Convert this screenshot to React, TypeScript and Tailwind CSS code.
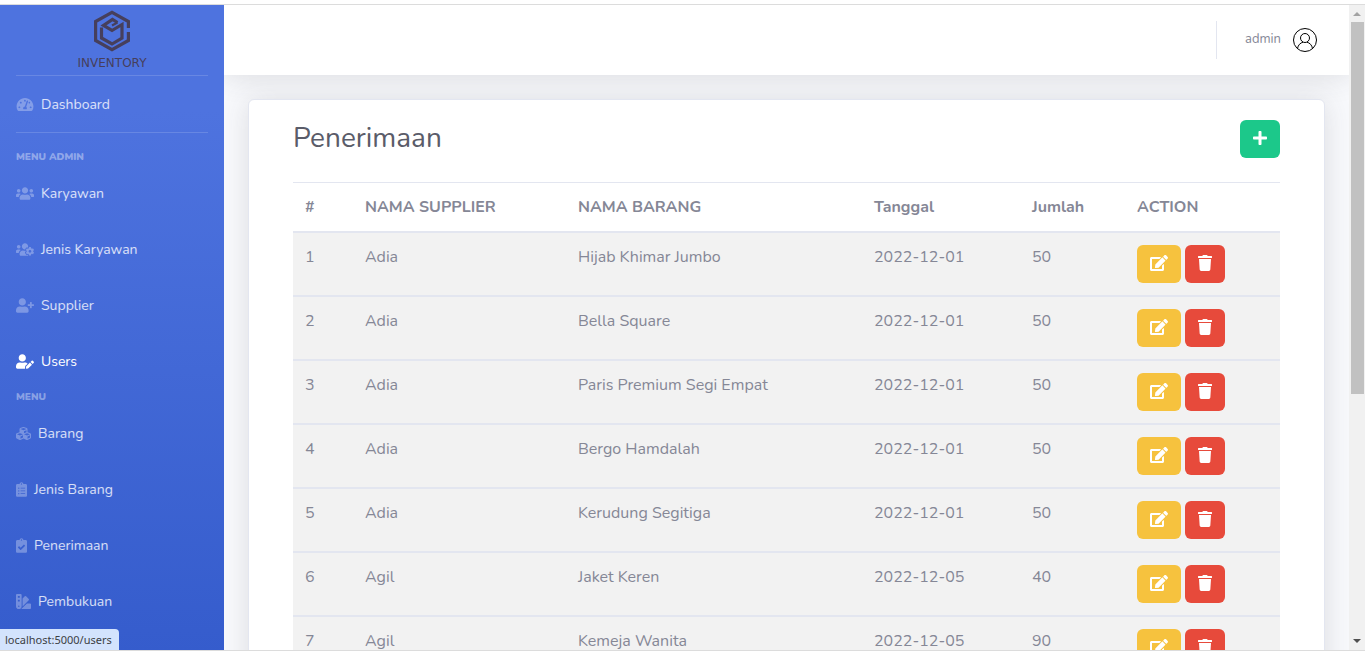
import {
  FaClipboardCheck,
  FaClipboardList,
  FaCubes,
  FaEdit,
  FaPlus,
  FaSwatchbook,
  FaTachometerAlt,
  FaTrash,
  FaUserEdit,
  FaUserPlus,
  FaUsers,
  FaUsersCog,
} from "react-icons/fa";
import type { IconType } from "react-icons";

type MenuItem = { label: string; icon: IconType; width: string; active?: boolean };

const adminMenu: MenuItem[] = [
  { label: "Karyawan", icon: FaUsers, width: "w-[18px]" },
  { label: "Jenis Karyawan", icon: FaUsersCog, width: "w-[18px]" },
  { label: "Supplier", icon: FaUserPlus, width: "w-[18px]" },
  { label: "Users", icon: FaUserEdit, width: "w-[18px]", active: true },
];

const menu: MenuItem[] = [
  { label: "Barang", icon: FaCubes, width: "w-[15px]" },
  { label: "Jenis Barang", icon: FaClipboardList, width: "w-[11px]" },
  { label: "Penerimaan", icon: FaClipboardCheck, width: "w-[11px]" },
  { label: "Pembukuan", icon: FaSwatchbook, width: "w-[15px]" },
];

const rows = [
  { supplier: "Adia", barang: "Hijab Khimar Jumbo", tanggal: "2022-12-01", jumlah: 50 },
  { supplier: "Adia", barang: "Bella Square", tanggal: "2022-12-01", jumlah: 50 },
  { supplier: "Adia", barang: "Paris Premium Segi Empat", tanggal: "2022-12-01", jumlah: 50 },
  { supplier: "Adia", barang: "Bergo Hamdalah", tanggal: "2022-12-01", jumlah: 50 },
  { supplier: "Adia", barang: "Kerudung Segitiga", tanggal: "2022-12-01", jumlah: 50 },
  { supplier: "Agil", barang: "Jaket Keren", tanggal: "2022-12-05", jumlah: 40 },
  { supplier: "Agil", barang: "Kemeja Wanita", tanggal: "2022-12-05", jumlah: 90 },
];

function Logo() {
  return (
    <a href="#" className="flex h-[70px] flex-col items-center pt-[5px] text-[#463f5c]">
      <svg viewBox="0 0 38 42" className="h-[42px] w-[38px]" fill="none" stroke="currentColor" strokeWidth="3.2">
        <path d="M35.4 18V11.5L19 2.4L2.6 11.5V30.5L19 39.6L35.4 30.5V22" />
        <path d="M8.500 17.500V28L19 34L29 28V14.500L19 20.500L10.500 15.500L19.500 9.500L24.500 12.500" />
        <path strokeWidth="2" d="M24.500 12.500L19 15.500" />
      </svg>
      <span className="mt-[3px] font-['DejaVu_Sans',sans-serif] text-[12px] leading-4">INVENTORY</span>
    </a>
  );
}

function SidebarLink({ item }: { item: MenuItem }) {
  const Icon = item.icon;
  return (
    <li>
      <a
        href="#"
        className={`flex h-14 items-center gap-[7px] px-4 text-[14px] ${item.active ? "text-white" : "text-white/80"}`}
      >
        <Icon className={`h-[15px] shrink-0 ${item.width} ${item.active ? "text-white" : "text-white/30"}`} />
        {item.label}
      </a>
    </li>
  );
}

function Sidebar() {
  return (
    <nav className="h-[1060px] w-56 shrink-0 bg-linear-to-b from-[#4e73df] from-10% to-[#224abe]">
      <Logo />
      <hr className="mx-4 border-white/15" />
      <ul>
        <SidebarLink item={{ label: "Dashboard", icon: FaTachometerAlt, width: "w-[18px]" }} />
      </ul>
      <hr className="mx-4 mb-4 border-white/15" />
      <h2 className="px-4 text-[10px] leading-4 font-black text-white/40">MENU ADMIN</h2>
      <ul>
        {adminMenu.map((item) => (
          <SidebarLink key={item.label} item={item} />
        ))}
      </ul>
      <h2 className="px-4 text-[10px] leading-4 font-black text-white/40">MENU</h2>
      <ul>
        {menu.map((item) => (
          <SidebarLink key={item.label} item={item} />
        ))}
      </ul>
    </nav>
  );
}

function Topbar() {
  return (
    <header className="flex h-[70px] items-center justify-end bg-white pr-8 shadow-[0_2px_28px_rgba(58,59,69,0.15)]">
      <div className="h-[38px] border-l border-[#e3e6f0]" />
      <button type="button" className="ml-7 flex items-center gap-3 text-[13px] text-[#858796]">
        admin
        <svg viewBox="0 0 24 24" className="size-6 text-black" fill="none" stroke="currentColor" strokeWidth="1">
          <circle cx="12" cy="12" r="11.5" />
          <circle cx="12" cy="10" r="4.5" />
          <path d="M4.500 20.500C5 17 7.500 14.800 10 14.200M19.500 20.500C19 17 16.500 14.800 14 14.200" />
        </svg>
      </button>
    </header>
  );
}

function PenerimaanTable() {
  return (
    <table className="mt-6 w-full table-fixed border-collapse text-left text-[16px] leading-6">
      <thead>
        <tr className="border-t border-b-2 border-[#e3e6f0] font-bold">
          <th className="w-[60px] p-3">#</th>
          <th className="w-[213px] p-3">NAMA SUPPLIER</th>
          <th className="w-[296px] p-3">NAMA BARANG</th>
          <th className="w-[158px] p-3">Tanggal</th>
          <th className="w-[105px] p-3">Jumlah</th>
          <th className="p-3">ACTION</th>
        </tr>
      </thead>
      <tbody>
        {rows.map((row, i) => (
          <tr key={row.barang} className="border-b-2 border-[#e3e6f0] bg-[#f2f2f2] align-top">
            <td className="p-3">{i + 1}</td>
            <td className="p-3">{row.supplier}</td>
            <td className="p-3">{row.barang}</td>
            <td className="p-3">{row.tanggal}</td>
            <td className="p-3">{row.jumlah}</td>
            <td className="p-3">
              <div className="flex gap-1">
                <button
                  type="button"
                  aria-label="Edit"
                  className="flex h-[38px] w-11 items-center justify-center rounded-md bg-[#f6c23e] pb-0.5 text-white"
                >
                  <FaEdit className="h-4 w-[18px]" />
                </button>
                <button
                  type="button"
                  aria-label="Hapus"
                  className="flex h-[38px] w-10 items-center justify-center rounded-md bg-[#e74a3b] pb-0.5 text-white"
                >
                  <FaTrash className="h-4 w-[14px]" />
                </button>
              </div>
            </td>
          </tr>
        ))}
      </tbody>
    </table>
  );
}

function Scrollbar() {
  return (
    <div className="flex w-4 shrink-0 flex-col items-center bg-[#f1f1f1]">
      <svg viewBox="0 0 16 17" className="h-[17px] w-4 fill-[#a3a3a3]">
        <path d="M4 11L8 7L12 11Z" />
      </svg>
      <div className="h-[372px] w-[13px] bg-[#c1c1c1]" />
      <svg viewBox="0 0 16 17" className="mt-auto h-[17px] w-4 fill-[#505050]">
        <path d="M4 6L8 10L12 6Z" />
      </svg>
    </div>
  );
}

export default function App() {
  return (
    <div className="relative flex h-screen flex-col overflow-hidden bg-white pt-1 font-['Nunito','Open_Sans',sans-serif] text-[#858796]">
      <div className="flex min-h-0 flex-1 overflow-hidden border-y border-[#dcdcdc]">
        <Sidebar />
        <div className="min-w-0 flex-1 overflow-hidden bg-[#f8f9fc]">
          <Topbar />
          <main className="px-6 pt-6">
            <section className="rounded-md border border-[#e3e6f0] bg-white px-11 pt-5 pb-11 shadow-[0_2px_28px_rgba(58,59,69,0.15)]">
              <div className="flex items-start justify-between">
                <h1 className="text-[28px] leading-9 font-normal text-[#5a5c69]">Penerimaan</h1>
                <button
                  type="button"
                  aria-label="Tambah"
                  className="flex h-[38px] w-10 items-center justify-center rounded-md bg-[#1cc88a] pb-0.5 text-white"
                >
                  <FaPlus className="size-4" />
                </button>
              </div>
              <PenerimaanTable />
            </section>
          </main>
        </div>
        <Scrollbar />
      </div>
      <div className="absolute bottom-px left-0 rounded-tr bg-[#d3e3fd] py-[2px] pr-[7px] pl-[5px] font-['Noto_Sans',sans-serif] text-[11px] leading-[17px] text-[#3c4043]">
        localhost:5000/users
      </div>
    </div>
  );
}
